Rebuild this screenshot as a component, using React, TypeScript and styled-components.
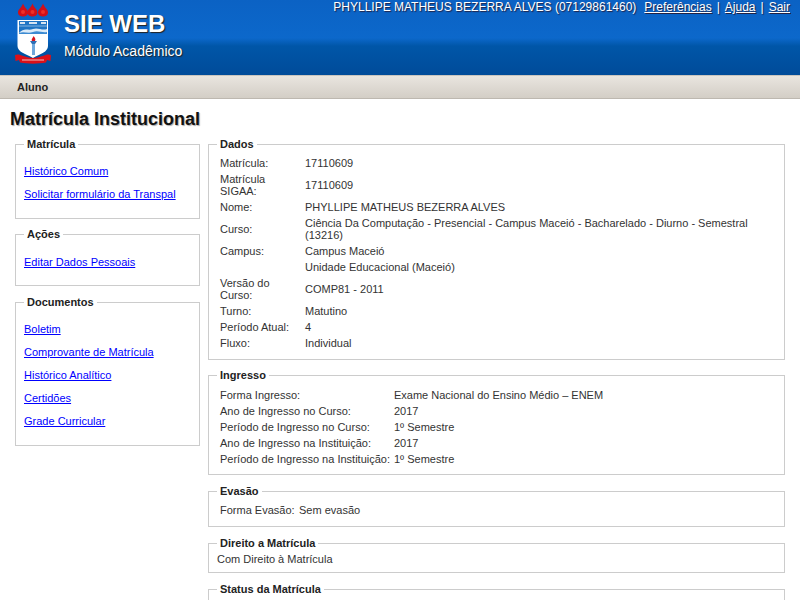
import React from "react";
import styled, { createGlobalStyle } from "styled-components";

const Global = createGlobalStyle`
  html, body { margin: 0; padding: 0; background: #fff; overflow: hidden; }
  body { font-family: "Liberation Sans", Arial, sans-serif; font-size: 11px; color: #333; }
`;
const Page = styled.div`width: 800px; height: 600px; overflow: hidden;`;
const Header = styled.header`
  height: 75px; display: flex; justify-content: space-between; color: #fff;
  background: linear-gradient(to bottom, #0b62c4 0, #0c68cb 38px, #0056a8 46px, #004b99 75px);
`;
const Brand = styled.div`display: flex; padding-left: 10px;`;
const BrandText = styled.div`margin-left: 4px; padding-top: 10px;`;
const Title = styled.div`font-size: 24px; line-height: 27px; font-weight: bold; text-shadow: 1px 1px 1px #222;`;
const Subtitle = styled.div`font-size: 14px; line-height: 16px; margin-top: 6px; text-shadow: 1px 1px 1px #222;`;
const UserBar = styled.div`font-size: 12px; line-height: 14px; padding: 0 10px 0 0; text-shadow: 1px 1px 1px #224; display: flex;`;
const UserLink = styled.a`color: #fff; text-decoration: underline;`;
const UserLinks = styled.span`margin-left: 8px;`;
const Sep = styled.span`margin: 0 5px;`;
const Nav = styled.nav`
  height: 22px; border-top: 1px solid #c9c5bf; border-bottom: 1px solid #bdb8b0; box-sizing: content-box;
  background: linear-gradient(to bottom, #e9e5df, #d3cec6);
  padding-left: 17px; font-weight: bold; font-size: 11px; line-height: 22px; color: #222;
`;
const PageTitle = styled.h1`margin: 0; padding: 10px 0 0 10px; font-size: 18px; line-height: 20px; font-weight: bold; color: #111; text-shadow: 1px 1px 1px #aaa;`;
const Columns = styled.div`display: flex; padding: 9px 15px 0; gap: 8px; align-items: flex-start;`;
const Side = styled.aside`width: 185px; flex: none; display: flex; flex-direction: column;`;
const Main = styled.main`width: 577px; flex: none; display: flex; flex-direction: column;`;
const Box = styled.fieldset<{ $mt?: number }>`
  margin: ${(p) => p.$mt ?? 0}px 0 0; padding: 0 8px; border: 1px solid #ccc; min-width: 0; box-sizing: border-box;
`;
const Legend = styled.legend`
  padding: 0 3px; font-weight: bold; font-size: 11px; line-height: 13px; color: #222;
`;
const LinkList = styled.ul<{ $shift?: number }>`
  list-style: none; margin: 0;
  padding: ${(p) => 9 + (p.$shift ?? 0)}px 0 ${(p) => 12 - (p.$shift ?? 0)}px 0;
`;
const LinkItem = styled.li`height: 23px; line-height: 23px;`;
const SideLink = styled.a`color: #00f; text-decoration: underline;`;
const Grid = styled.table<{ $shift?: number }>`
  border-collapse: collapse; width: calc(100% - 6px); table-layout: fixed;
  margin: ${(p) => 4 + (p.$shift ?? 0)}px 3px ${(p) => 8 - (p.$shift ?? 0)}px;
`;
const Cell = styled.td<{ $w?: number }>`
  padding: 2px 0; line-height: 12px; vertical-align: middle; color: #333;
  ${(p) => (p.$w ? `width: ${p.$w}px; box-sizing: border-box; padding-right: 3px;` : "")}
`;
const Plain = styled.div`padding: 2px 0 6px; line-height: 14px; color: #333;`;

const flame = (x: number) =>
  `M${x} 12.5 C${x} 9 ${x + 3.5} 8 ${x + 5} 3.5 C${x + 6.5} 8 ${x + 10} 9 ${x + 10} 12.5 C${x + 10} 15.5 ${x + 7} 16.5 ${x + 5} 16.5 C${x + 3} 16.5 ${x} 15.5 ${x} 12.5Z`;

const Crest = () => (
  <svg width="50" height="70" viewBox="0 0 50 70" style={{ display: "block" }}>
    <path d={flame(8) + flame(17.500) + flame(28)} fill="#d0101a" />
    <circle cx="13" cy="12" r="2" fill="#ee3028" />
    <circle cx="22.5" cy="12" r="2" fill="#ee3028" />
    <circle cx="33" cy="12" r="2" fill="#ee3028" />
    <path d="M7.500 20 H38 V46 C38 52 30 54 23 58 C16 54 7.500 52 7.500 46Z" fill="#fff" />
    <path d="M9 21 H37 V34 H9Z" fill="#1f74c4" />
    <path d="M10 22 h5 v2 h-5z M19 22 h8 v2 h-8z M31 22 h5 v2 h-5z" fill="#d5e3f2" />
    <path d="M9 26 H37" stroke="#cfe0f2" strokeWidth="0.6" />
    <path d="M9 33 C14 27 18 31 23 29 C28 27 32 31 37 29 L37 34 L9 34 Z" fill="#dcebf8" />
    <path d="M9 33 C14 31 18 34 23 32 C28 30 32 33 37 32 L37 34 L9 34 Z" fill="#3d8bd2" />
    <rect x="22" y="42" width="3" height="13" fill="#6fa8dc" />
    <path d="M20 41 h7 l-2 3 h-3z" fill="#2e6fb5" />
    <path d="M23.500 36 C25 38 26 39 25 41 H22 C21 39 23 38 23.500 36Z" fill="#d8141c" />
    <path d="M5 55 C10 53 12 57 23 58 C34 57 36 53 41 55 L40.500 61 L37 60 L36 62.500 C28 64 18 64 10 62.500 L9 60 L5.500 61Z" fill="#dc1018" />
    <path d="M12 60 H34" stroke="#f3c0c0" strokeWidth="1" />
  </svg>
);

const Row = ({ k, v, w }: { k: React.ReactNode; v: React.ReactNode; w: number }) => (
  <tr>
    <Cell $w={w}>{k}</Cell>
    <Cell>{v}</Cell>
  </tr>
);

export default function App() {
  return (
    <Page>
      <Global />
      <Header>
        <Brand>
          <Crest />
          <BrandText>
            <Title>SIE WEB</Title>
            <Subtitle>Módulo Acadêmico</Subtitle>
          </BrandText>
        </Brand>
        <UserBar>
          <span>PHYLLIPE MATHEUS BEZERRA ALVES (07129861460)</span>
          <UserLinks>
            <UserLink>Preferências</UserLink>
            <Sep>|</Sep>
            <UserLink>Ajuda</UserLink>
            <Sep>|</Sep>
            <UserLink>Sair</UserLink>
          </UserLinks>
        </UserBar>
      </Header>
      <Nav>Aluno</Nav>
      <PageTitle>Matrícula Institucional</PageTitle>
      <Columns>
        <Side>
          <Box>
            <Legend>Matrícula</Legend>
            <LinkList>
              <LinkItem><SideLink>Histórico Comum</SideLink></LinkItem>
              <LinkItem><SideLink>Solicitar formulário da Transpal</SideLink></LinkItem>
            </LinkList>
          </Box>
          <Box $mt={9}>
            <Legend>Ações</Legend>
            <LinkList $shift={1}>
              <LinkItem><SideLink>Editar Dados Pessoais</SideLink></LinkItem>
            </LinkList>
          </Box>
          <Box $mt={10}>
            <Legend>Documentos</Legend>
            <LinkList>
              <LinkItem><SideLink>Boletim</SideLink></LinkItem>
              <LinkItem><SideLink>Comprovante de Matrícula</SideLink></LinkItem>
              <LinkItem><SideLink>Histórico Analítico</SideLink></LinkItem>
              <LinkItem><SideLink>Certidões</SideLink></LinkItem>
              <LinkItem><SideLink>Grade Curricular</SideLink></LinkItem>
            </LinkList>
          </Box>
        </Side>
        <Main>
          <Box>
            <Legend>Dados</Legend>
            <Grid>
              <tbody>
                <Row w={85} k="Matrícula:" v="17110609" />
                <Row w={85} k="Matrícula SIGAA:" v="17110609" />
                <Row w={85} k="Nome:" v="PHYLLIPE MATHEUS BEZERRA ALVES" />
                <Row w={85} k="Curso:" v="Ciência Da Computação - Presencial - Campus Maceió - Bacharelado - Diurno - Semestral (13216)" />
                <Row w={85} k="Campus:" v="Campus Maceió" />
                <Row w={85} k="" v="Unidade Educacional (Maceió)" />
                <Row w={85} k="Versão do Curso:" v="COMP81 - 2011" />
                <Row w={85} k="Turno:" v="Matutino" />
                <Row w={85} k="Período Atual:" v="4" />
                <Row w={85} k="Fluxo:" v="Individual" />
              </tbody>
            </Grid>
          </Box>
          <Box $mt={9}>
            <Legend>Ingresso</Legend>
            <Grid $shift={1}>
              <tbody>
                <Row w={174} k="Forma Ingresso:" v="Exame Nacional do Ensino Médio – ENEM" />
                <Row w={174} k="Ano de Ingresso no Curso:" v="2017" />
                <Row w={174} k="Período de Ingresso no Curso:" v="1º Semestre" />
                <Row w={174} k="Ano de Ingresso na Instituição:" v="2017" />
                <Row w={174} k="Período de Ingresso na Instituição:" v="1º Semestre" />
              </tbody>
            </Grid>
          </Box>
          <Box $mt={10}>
            <Legend>Evasão</Legend>
            <Grid>
              <tbody>
                <Row w={79} k="Forma Evasão:" v="Sem evasão" />
              </tbody>
            </Grid>
          </Box>
          <Box $mt={10}>
            <Legend>Direito a Matrícula</Legend>
            <Plain>Com Direito à Matrícula</Plain>
          </Box>
          <Box $mt={10}>
            <Legend>Status da Matrícula</Legend>
            <Plain>&nbsp;</Plain>
          </Box>
        </Main>
      </Columns>
    </Page>
  );
}
